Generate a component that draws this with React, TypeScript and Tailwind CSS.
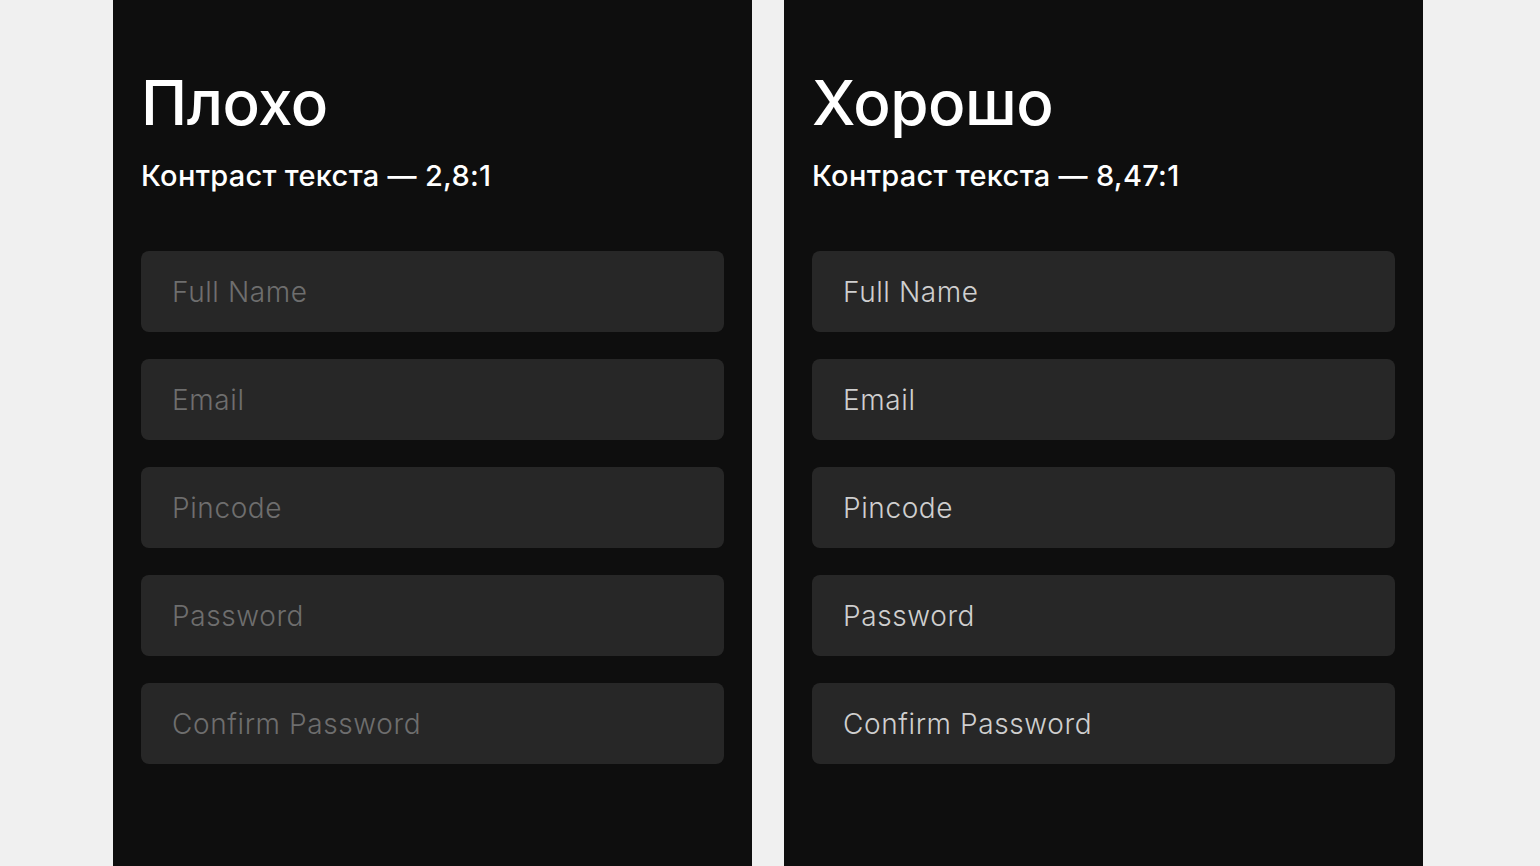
const fields = ['Full Name', 'Email', 'Pincode', 'Password', 'Confirm Password'];

function Panel({ title, ratio, textClass }: { title: string; ratio: string; textClass: string }) {
  return (
    <section className="w-[639px] h-full bg-[#0e0e0e] px-[28px] pt-[66px]">
      <h1 className="text-[62px] leading-[74px] font-medium text-white tracking-[-0.5px]">{title}</h1>
      <p className="mt-[19px] text-[29px] leading-[34px] font-medium text-white tracking-[0.3px]">
        Контраст текста — {ratio}
      </p>
      <div className="mt-[58px] flex flex-col gap-[27px]">
        {fields.map((f) => (
          <div key={f} className="h-[81px] rounded-[8px] bg-[#272727] flex items-center pl-[31px]">
            <span className={`text-[28px] font-light tracking-[0.6px] ${textClass}`}>{f}</span>
          </div>
        ))}
      </div>
    </section>
  );
}

export default function App() {
  return (
    <main
      className="w-[1540px] h-[866px] bg-[#f0f0f0] flex pl-[113px] gap-[32px] overflow-hidden"
      style={{ fontFamily: 'Inter, "Noto Sans", sans-serif' }}
    >
      <Panel title="Плохо" ratio="2,8:1" textClass="text-[#6e6e6e]" />
      <Panel title="Хорошо" ratio="8,47:1" textClass="text-[#cfcfcf]" />
    </main>
  );
}
